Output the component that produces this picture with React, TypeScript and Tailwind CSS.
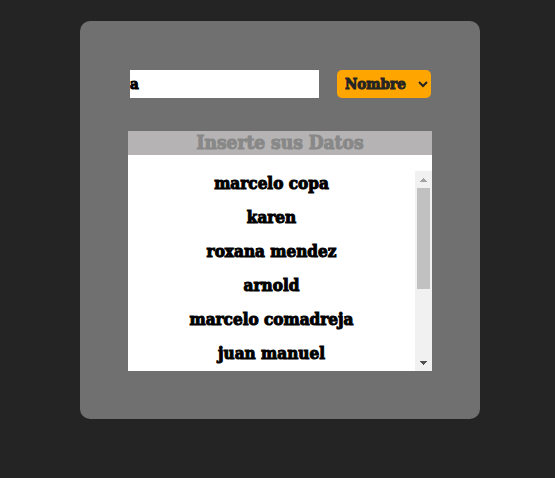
import { useRef, useState } from "react";

const names = [
  "marcelo copa",
  "karen",
  "roxana mendez",
  "arnold",
  "marcelo comadreja",
  "juan manuel",
  "mariana",
  "carlos",
  "andrea",
  "pablo",
];

const TRACK = 166;
const THUMB = 101;

function NameList({ items }: { items: string[] }) {
  const list = useRef<HTMLUListElement>(null);
  const [offset, setOffset] = useState(0);

  const onScroll = () => {
    const el = list.current;
    if (!el) return;
    const range = el.scrollHeight - el.clientHeight;
    setOffset(range > 0 ? (el.scrollTop / range) * (TRACK - THUMB) : 0);
  };
  const step = (dy: number) => list.current?.scrollBy({ top: dy });

  return (
    <div className="flex h-[200px]">
      <ul
        ref={list}
        onScroll={onScroll}
        className="flex flex-1 flex-col gap-2.5 overflow-y-scroll text-center [scrollbar-width:none]"
      >
        {items.map((name) => (
          <li key={name} className="shrink-0 text-[17px] leading-6">
            {name}
          </li>
        ))}
      </ul>
      <div className="flex w-[17px] flex-col bg-[#f1f1f1]">
        <button
          type="button"
          aria-label="Subir"
          onClick={() => step(-34)}
          className="flex h-[17px] items-center justify-center"
        >
          <svg width="7" height="4" viewBox="0 0 7 4" fill="#a3a3a3" shapeRendering="crispEdges">
            <path d="M3 0h1v1h1v1h1v1h1v1H0V3h1V2h1V1h1z" />
          </svg>
        </button>
        <div className="flex-1 px-0.5">
          <div className="h-[101px] bg-[#c1c1c1]" style={{ marginTop: offset }} />
        </div>
        <button
          type="button"
          aria-label="Bajar"
          onClick={() => step(34)}
          className="flex h-[17px] items-center justify-center"
        >
          <svg width="7" height="4" viewBox="0 0 7 4" fill="#505050" shapeRendering="crispEdges">
            <path d="M0 0h7v1H6v1H5v1H4v1H3V3H2V2H1V1H0z" />
          </svg>
        </button>
      </div>
    </div>
  );
}

export default function App() {
  const [query, setQuery] = useState("a");
  const [field, setField] = useState("Nombre");

  return (
    <div className="min-h-screen bg-[#242424] pt-[21px] pl-[5px] font-['DejaVu_Serif_Condensed','DejaVu_Serif',serif] font-bold text-black [-webkit-text-stroke-width:1px]">
      <main className="mx-auto w-full max-w-[400px] rounded-[10px] bg-[#707070] p-12">
        <form className="flex items-center gap-[18px] pt-px pr-px pb-[33px] pl-0.5" onSubmit={(e) => e.preventDefault()}>
          <input
            type="text"
            aria-label="Buscar"
            value={query}
            onChange={(e) => setQuery(e.target.value)}
            className="h-7 min-w-0 flex-1 bg-white text-[15px] outline-none"
          />
          <select
            aria-label="Campo"
            value={field}
            onChange={(e) => setField(e.target.value)}
            className="h-7 w-[94px] rounded-[5px] bg-[#ffa500] px-1 text-[15px] text-[#242424]"
          >
            <option>Nombre</option>
            <option>Apellido</option>
          </select>
        </form>
        <section className="flex flex-col gap-4 bg-white">
          <h1 className="bg-[#b5b3b3] pb-0.5 text-center text-[19px] leading-[22px] text-[#888888]">Inserte sus Datos</h1>
          <NameList items={names.filter((n) => n.includes(query.toLowerCase()))} />
        </section>
      </main>
    </div>
  );
}
